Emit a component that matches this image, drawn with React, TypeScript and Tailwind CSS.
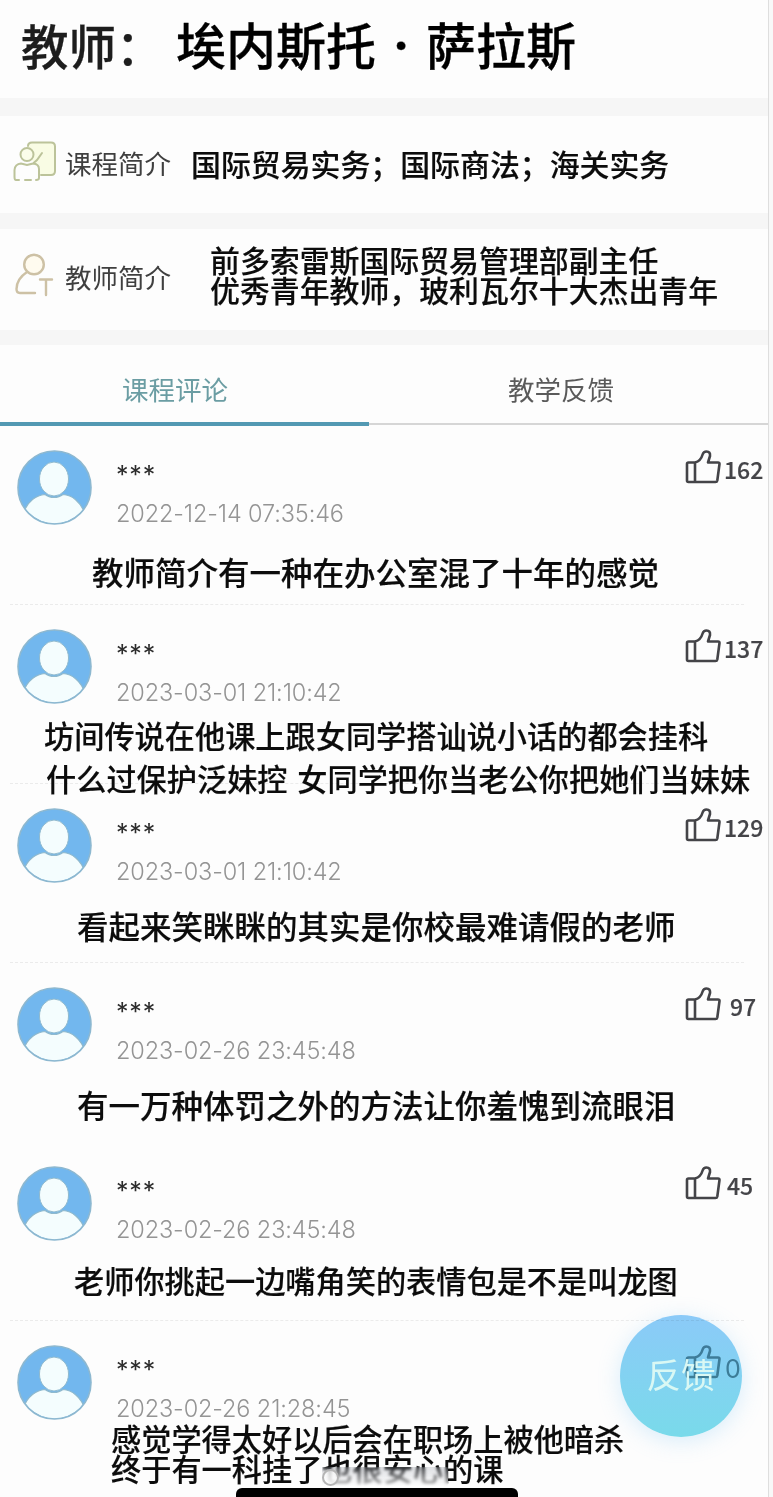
import React from "react";
import clsx from "clsx";

type Line = { text: string; className: string };

type Comment = {
  date: string;
  likes: string;
  likesClass: string;
  bodyClass: string;
  lines: Line[];
  divider: boolean;
};

const comments: Comment[] = [
  {
    date: "2022-12-14 07:35:46",
    likes: "162",
    likesClass: "pl-[3px]",
    bodyClass: "pt-[24px] text-[31.5px] leading-[43px]",
    lines: [{ text: "教师简介有一种在办公室混了十年的感觉", className: "ml-[92px]" }],
    divider: true,
  },
  {
    date: "2023-03-01 21:10:42",
    likes: "137",
    likesClass: "pl-[3px]",
    bodyClass: "pt-[9px] text-[30.2px] leading-[43px]",
    lines: [
      { text: "坊间传说在他课上跟女同学搭讪说小话的都会挂科", className: "ml-[44px]" },
      {
        text: "什么过保护泛妹控 女同学把你当老公你把她们当妹妹",
        className: "ml-[46px] [word-spacing:3px]",
      },
    ],
    divider: true,
  },
  {
    date: "2023-03-01 21:10:42",
    likes: "129",
    likesClass: "pl-[3px]",
    bodyClass: "pt-[20px] text-[31.5px] leading-[43px]",
    lines: [{ text: "看起来笑眯眯的其实是你校最难请假的老师", className: "ml-[77px]" }],
    divider: true,
  },
  {
    date: "2023-02-26 23:45:48",
    likes: "97",
    likesClass: "pl-[9px]",
    bodyClass: "pt-[20px] text-[31.5px] leading-[43px]",
    lines: [{ text: "有一万种体罚之外的方法让你羞愧到流眼泪", className: "ml-[77px]" }],
    divider: false,
  },
  {
    date: "2023-02-26 23:45:48",
    likes: "45",
    likesClass: "pl-[6px]",
    bodyClass: "pt-[17px] text-[30.2px] leading-[43px]",
    lines: [{ text: "老师你挑起一边嘴角笑的表情包是不是叫龙图", className: "ml-[74px]" }],
    divider: true,
  },
  {
    date: "2023-02-26 21:28:45",
    likes: "0",
    likesClass: "pl-[4px]",
    bodyClass: "pt-[2px] text-[30.2px] leading-[30px]",
    lines: [
      { text: "感觉学得太好以后会在职场上被他暗杀", className: "ml-[111px]" },
      { text: "终于有一科挂了也很安心的课", className: "ml-[111px]" },
    ],
    divider: false,
  },
];

const Avatar: React.FC = () => (
  <svg viewBox="0 0 75 75" className="size-[75px] shrink-0" fill="none">
    <defs>
      <clipPath id="face">
        <circle cx="37.5" cy="37.5" r="36" />
      </clipPath>
    </defs>
    <circle cx="37.5" cy="37.5" r="36.5" fill="#72b7ee" />
    <g clipPath="url(#face)">
      <path
        d="M6 64C10 51 20 45 28 44.500C33 48.500 41 48.500 46 44.500C55 45 64 52 68 64L60 80H14Z"
        fill="#f4fdfe"
        stroke="#8fb9cd"
        strokeWidth="1.200"
      />
      <ellipse cx="37" cy="29" rx="14.500" ry="17" fill="#f4fdfe" stroke="#8fb9cd" strokeWidth="1" />
    </g>
    <circle cx="37.5" cy="37.5" r="36.5" stroke="#8db8d0" strokeWidth="1.600" />
  </svg>
);

const ThumbIcon: React.FC = () => (
  <svg
    viewBox="0 0 36 34"
    className="h-[34px] w-[36px] shrink-0"
    fill="none"
    stroke="currentColor"
    strokeWidth="2.600"
    strokeLinejoin="round"
    strokeLinecap="round"
  >
    <path d="M10 12.500H3.500Q2 12.500 2 14V30.500Q2 32 3.500 32H30.500Q32 32 32.300 30.500L34.500 14Q34.700 12.500 33 12.500H23L25 6Q25.500 1.500 21.500 1.500Q18.500 1.500 17.600 4.500C16.500 8.500 14 11.500 10 12.500V32" />
  </svg>
);

const CourseIcon: React.FC = () => (
  <svg
    viewBox="0 0 44 42"
    className="h-[42px] w-[44px] shrink-0"
    fill="none"
    stroke="#bcc39a"
    strokeWidth="2"
    strokeLinecap="round"
  >
    <path
      d="M15 6Q15 2.500 19 2.500H38Q42 2.500 42 6.500V31Q42 35 38 35H27V28Q27 24 23 23L15 18Z"
      fill="#f9fce4"
      stroke="none"
    />
    <path d="M15 6Q15 2.500 19 2.500H38Q42 2.500 42 6.500V31Q42 35 38 35H28" />
    <circle cx="14" cy="14.500" r="6.500" fill="#fbfdea" />
    <path d="M6 40H3Q1.500 40 1.500 37V30Q2 24 8 23.500L14 25L20 23.500L24 20L29 13M20 23.500Q26 24 26 29V38Q26 40 23 40M12 40H18" />
  </svg>
);

const TeacherIcon: React.FC = () => (
  <svg
    viewBox="0 0 40 44"
    className="h-[44px] w-[40px] shrink-0"
    fill="none"
    stroke="#cdc1a5"
    strokeWidth="2.400"
    strokeLinecap="round"
  >
    <circle cx="19" cy="11.500" r="9.800" fill="#fffbef" />
    <path d="M12 19C6 23 1.500 29 1.500 36Q1.500 40 5 40H20" />
    <path d="M25 26.500H37M31 26.500V42" />
  </svg>
);

const Band: React.FC<{ className: string }> = ({ className }) => (
  <div className={clsx("shrink-0 bg-[#f6f6f6]", className)} />
);

const CommentRow: React.FC<{ comment: Comment; last: boolean }> = ({ comment, last }) => (
  <article className={clsx("flex shrink-0 flex-col", last ? "h-[176px]" : "h-[179px]")}>
    <div className="flex h-[100px] shrink-0 pt-[24px]">
      <div className="w-[116px] pl-[17px]">
        <Avatar />
      </div>
      <div className="flex flex-1 flex-col font-['Inter','Liberation_Sans',sans-serif] whitespace-nowrap">
        <span className="mt-[7px] h-[37px] text-[25px] leading-[37px] tracking-[0.8px] text-[#2c2c2c]">
          ***
        </span>
        <time className="mt-[4px] text-[23.5px] leading-[32px] font-light tracking-[-0.12px] text-[#949494]">
          {comment.date}
        </time>
      </div>
      <div className={clsx("flex w-[83px] items-start", last ? "text-[#74969f]" : "text-[#444448]")}>
        <ThumbIcon />
        <span
          className={clsx(
            "leading-[30px]",
            last
              ? "mt-[9px] font-['Inter',sans-serif] text-[25px]"
              : "mt-[4px] text-[23px] font-medium [-webkit-text-stroke:0.2px]",
            comment.likesClass
          )}
        >
          {comment.likes}
        </span>
      </div>
    </div>
    <div
      className={clsx(
        "z-10 min-h-0 flex-1 font-medium whitespace-nowrap text-[#0c0c0c] [-webkit-text-stroke:0.15px]",
        comment.bodyClass
      )}
    >
      {comment.lines.map((line) => (
        <p key={line.text} className={line.className}>
          {line.text}
        </p>
      ))}
    </div>
    {comment.divider && (
      <div className="mr-[24px] ml-[10px] border-b border-dashed border-[#ebebeb]" />
    )}
  </article>
);

const App: React.FC = () => {
  return (
    <div className="relative h-[1497px] w-[773px] overflow-hidden bg-[#f8f8f8] font-['Noto_Sans_CJK_SC',sans-serif]">
      <main className="relative z-0 flex h-full w-[769px] flex-col border-r border-[#dedede] bg-[#fdfdfd]">
        <header className="flex h-[98px] shrink-0 items-start font-medium whitespace-nowrap [-webkit-text-stroke:0.3px]">
          <span className="ml-[21px] w-[155px] pt-[9px] text-[47.5px] leading-[72px] text-[#1d1d1d]">
            教师：
          </span>
          <h1 className="flex pt-[7px] text-[50px] leading-[72px] text-black">
            埃内斯托
            <span className="w-[50px] pt-[2px] text-center font-['Inter','Liberation_Sans',sans-serif] font-bold">
              ·
            </span>
            萨拉斯
          </h1>
        </header>

        <Band className="h-[18px]" />

        <section className="flex h-[97px] shrink-0 items-center whitespace-nowrap">
          <div className="flex w-[65px] pb-[8px] pl-[13px]">
            <CourseIcon />
          </div>
          <span className="w-[126px] pb-[4px] text-[26.5px] text-[#3f3f3f]">课程简介</span>
          <p className="pb-[2px] text-[29.9px] font-medium text-[#0c0c0c] [-webkit-text-stroke:0.15px]">
            国际贸易实务；国际商法；海关实务
          </p>
        </section>

        <Band className="h-[16px]" />

        <section className="flex h-[101px] shrink-0 items-center whitespace-nowrap">
          <div className="flex w-[65px] pb-[10px] pl-[15px]">
            <TeacherIcon />
          </div>
          <span className="w-[145px] pb-[6px] text-[26.5px] text-[#3f3f3f]">教师简介</span>
          <div className="pb-[12px] text-[29.9px] leading-[30px] font-medium text-[#0c0c0c] [-webkit-text-stroke:0.15px]">
            <p>前多索雷斯国际贸易管理部副主任</p>
            <p>优秀青年教师，玻利瓦尔十大杰出青年</p>
          </div>
        </section>

        <Band className="h-[15px]" />

        <nav className="flex h-[81px] shrink-0 text-[26.5px] leading-[40px]">
          <div className="w-[369px] border-b-4 border-[#5399b3] pt-[24px] pl-[122px] text-[#6b9da3]">
            课程评论
          </div>
          <div className="mb-[1px] flex-1 border-b-2 border-[#d6d6d6] pt-[24px] pl-[139px] text-[#5a5a5a]">
            教学反馈
          </div>
        </nav>

        {comments.map((comment, index) => (
          <CommentRow key={index} comment={comment} last={index === comments.length - 1} />
        ))}
      </main>

      {/* floating feedback button */}
      <div className="absolute top-[1315px] left-[620px] size-[122px] rounded-full bg-linear-to-b from-[#8cccfa] to-[#7adcec] mix-blend-multiply shadow-[0_4px_22px_rgba(130,200,245,0.3)]" />
      <button className="absolute top-[1315px] left-[620px] size-[122px] rounded-full pb-[4px] text-[34.5px] text-[#d9f8f4]">
        反馈
      </button>

      {/* faded watermark strip */}
      <div className="absolute top-[1467px] left-[322px] flex h-[20px] w-[126px] items-center bg-linear-to-b from-gray-500/20 to-white/80 backdrop-blur-[1.5px]">
        <span className="size-[17px] rounded-full border-2 border-[#b5b5b5] bg-white/70" />
      </div>

      {/* home indicator */}
      <div className="absolute top-[1488px] left-[236px] h-[12px] w-[282px] rounded-t-[6px] bg-black" />
    </div>
  );
};

export default App;
